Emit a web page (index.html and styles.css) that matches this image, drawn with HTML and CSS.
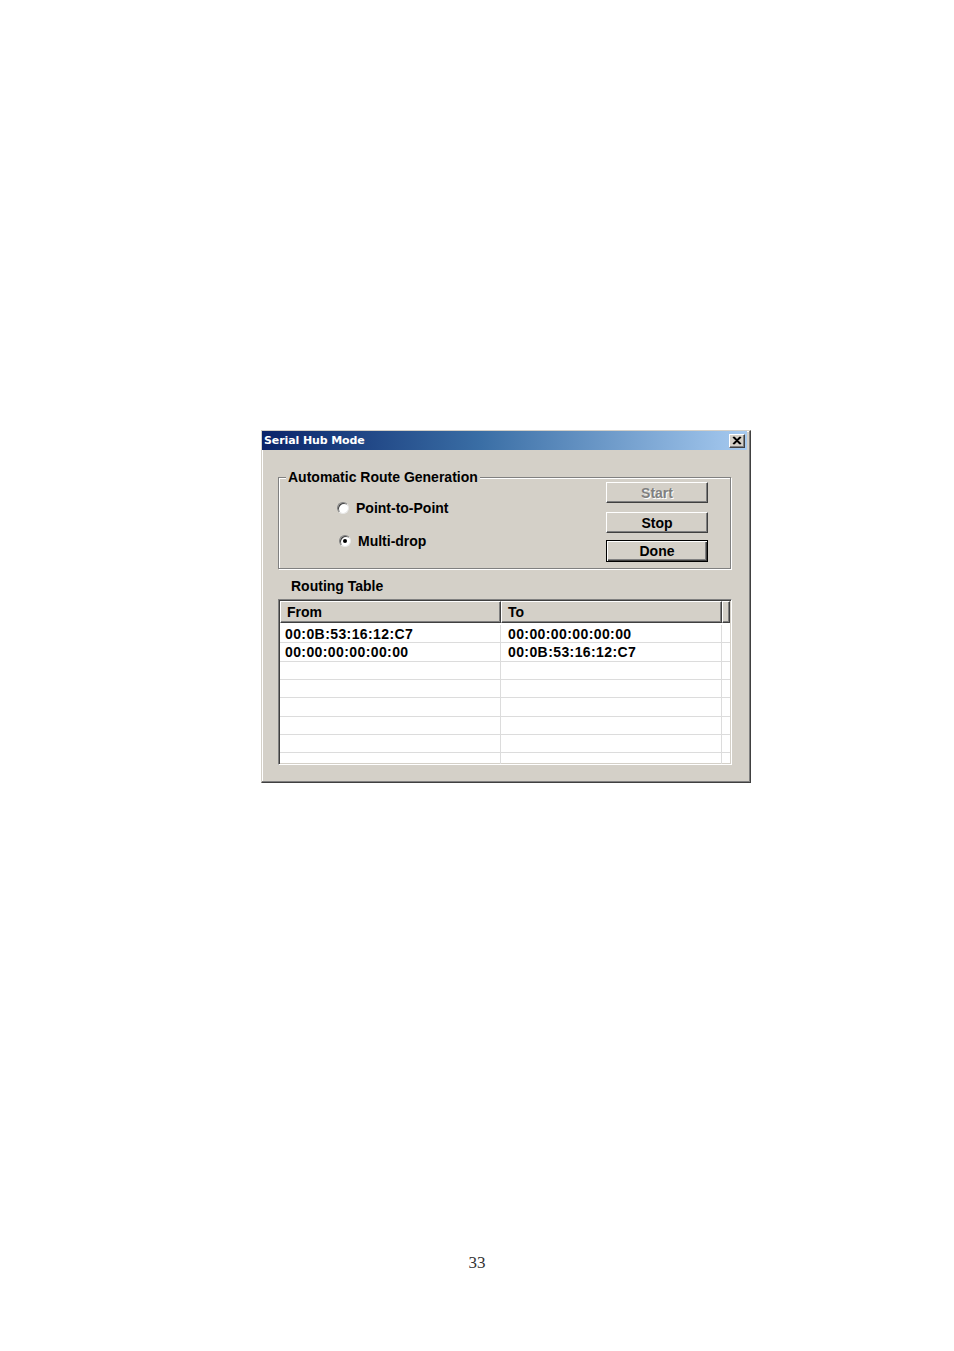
FILE: index.html
```html
<!DOCTYPE html>
<html>
<head>
<meta charset="utf-8">
<title>Serial Hub Mode</title>
<link rel="stylesheet" href="styles.css">
</head>
<body>
<div class="page">
  <div class="dialog">
    <div class="titlebar">
      <span class="title">Serial Hub Mode</span>
      <span class="close">
        <svg width="10" height="9" viewBox="0 0 10 9"><path d="M1 1 L8 8 M2 1 L9 8 M8 1 L1 8 M9 1 L2 8" stroke="#000" stroke-width="1.3" fill="none"/></svg>
      </span>
    </div>

    <div class="group">
      <span class="legend">Automatic Route Generation</span>
      <div class="radios">
        <div class="radio-row"><span class="radio"></span><span>Point-to-Point</span></div>
        <div class="radio-row second"><span class="radio checked"></span><span>Multi-drop</span></div>
      </div>
      <div class="buttons">
        <div class="btn disabled">Start</div>
        <div class="btn stop">Stop</div>
        <div class="btn default">Done</div>
      </div>
    </div>

    <div class="rt-label">Routing Table</div>

    <div class="table">
      <div class="thead">
        <div class="th c1">From</div>
        <div class="th c2">To</div>
        <div class="th c3"></div>
      </div>
      <div class="tbody">
        <div class="tr"><div class="td c1">00:0B:53:16:12:C7</div><div class="td c2">00:00:00:00:00:00</div><div class="td c3"></div></div>
        <div class="tr"><div class="td c1">00:00:00:00:00:00</div><div class="td c2">00:0B:53:16:12:C7</div><div class="td c3"></div></div>
        <div class="tr"><div class="td c1"></div><div class="td c2"></div><div class="td c3"></div></div>
        <div class="tr"><div class="td c1"></div><div class="td c2"></div><div class="td c3"></div></div>
        <div class="tr"><div class="td c1"></div><div class="td c2"></div><div class="td c3"></div></div>
        <div class="tr"><div class="td c1"></div><div class="td c2"></div><div class="td c3"></div></div>
        <div class="tr"><div class="td c1"></div><div class="td c2"></div><div class="td c3"></div></div>
        <div class="tr"><div class="td c1"></div><div class="td c2"></div><div class="td c3"></div></div>
      </div>
    </div>
  </div>

  <div class="pagenum">33</div>
</div>
</body>
</html>
```

FILE: styles.css
```css
html, body {
  margin: 0;
  padding: 0;
  background: #fff;
}

.page {
  width: 954px;
  height: 1351px;
  padding-top: 430px;
  box-sizing: border-box;
}

.dialog {
  margin-left: 261px;
  width: 490px;
  height: 353px;
  box-sizing: border-box;
  background: #d4d0c8;
  border: 1px solid;
  border-color: #d4d0c8 #404040 #404040 #d4d0c8;
  box-shadow: inset -1px -1px 0 #808080, inset 1px 1px 0 #fff;
  padding: 0 3px 0 0;
  font-family: "Liberation Sans", Arial, sans-serif;
  font-weight: bold;
  font-size: 14px;
  color: #000;
}

.titlebar {
  height: 19px;
  background: linear-gradient(to right, #0a246a 0%, #3a6ea5 45%, #a6caf0 100%);
  display: flex;
  align-items: center;
  justify-content: space-between;
  padding: 0 2px 0 2px;
}

.title {
  font-family: "DejaVu Sans", Verdana, sans-serif;
  font-size: 11px;
  font-weight: bold;
  color: #fff;
  letter-spacing: -0.1px;
}

.close {
  width: 16px;
  height: 14px;
  box-sizing: border-box;
  background: #d4d0c8;
  border: 1px solid;
  border-color: #fff #404040 #404040 #fff;
  box-shadow: inset -1px -1px 0 #808080;
  display: flex;
  align-items: center;
  justify-content: center;
}

.close svg { display: block; }

.group {
  position: relative;
  margin: 27px 0 0 16px;
  width: 453px;
  height: 92px;
  box-sizing: border-box;
  border: 1px solid #808080;
  box-shadow: inset 1px 1px 0 #fff, 1px 1px 0 #fff;
  display: flex;
  justify-content: space-between;
}

.legend {
  position: absolute;
  top: -10px;
  left: 7px;
  padding: 0 2px;
  background: #d4d0c8;
  line-height: 18px;
}

.radios {
  padding: 21px 0 0 58px;
}

.radio-row {
  display: flex;
  align-items: center;
  height: 17px;
  gap: 7px;
}

.radio-row.second {
  margin-top: 16px;
  padding-left: 2px;
}

.radio {
  width: 12px;
  height: 12px;
  box-sizing: border-box;
  border-radius: 50%;
  background: #fff;
  border: 1px solid;
  border-color: #808080 #e8e8e8 #e8e8e8 #808080;
  box-shadow: inset 1px 1px 0 #404040;
  position: relative;
}

.radio.checked::after {
  content: "";
  position: absolute;
  left: 3px;
  top: 3px;
  width: 4px;
  height: 4px;
  border-radius: 50%;
  background: #000;
}

.buttons {
  display: flex;
  flex-direction: column;
  padding-top: 4px;
  margin-right: 22px;
}

.btn {
  width: 102px;
  height: 21px;
  box-sizing: border-box;
  background: #d4d0c8;
  border: 1px solid;
  border-color: #fff #404040 #404040 #fff;
  box-shadow: inset -1px -1px 0 #808080;
  display: flex;
  align-items: center;
  justify-content: center;
  line-height: 1;
}

.btn.disabled {
  color: #808080;
  text-shadow: 1px 1px 0 #fff;
}

.btn.stop {
  margin-top: 9px;
}

.btn.default {
  margin-top: 7px;
  height: 22px;
  border: 1px solid #000;
  box-shadow: inset 1px 1px 0 #fff, inset -1px -1px 0 #404040, inset -2px -2px 0 #808080;
}

.rt-label {
  margin: 9px 0 0 29px;
  line-height: 17px;
}

.table {
  margin: 4px 0 0 16px;
  width: 454px;
  height: 166px;
  box-sizing: border-box;
  border: 1px solid;
  border-color: #808080 #fff #fff #808080;
  box-shadow: inset 1px 1px 0 #404040, inset -1px -1px 0 #d4d0c8;
  padding: 1px;
  overflow: hidden;
  background: #fff;
}

.thead {
  display: flex;
  height: 22px;
}

.th {
  box-sizing: border-box;
  background: #d4d0c8;
  border: 1px solid;
  border-color: #fff #404040 #404040 #fff;
  box-shadow: inset -1px -1px 0 #808080;
  padding-left: 6px;
  display: flex;
  align-items: center;
  line-height: 1;
}

.c1 { width: 221px; }
.c2 { width: 221px; }
.c3 { flex: 1; }

.tbody {
  padding-top: 2px;
}

.tr {
  display: flex;
  height: 18.35px;
  box-sizing: border-box;
  border-bottom: 1px solid #dcdcdc;
}

.td {
  box-sizing: border-box;
  border-right: 1px solid #dcdcdc;
  display: flex;
  align-items: center;
  letter-spacing: 0.4px;
  padding-left: 5px;
  white-space: nowrap;
}

.td.c2 { padding-left: 7px; }
.td.c3 { border-right: none; }

.pagenum {
  margin-top: 470px;
  text-align: center;
  font-family: "Liberation Serif", "Times New Roman", serif;
  font-size: 17px;
  color: #333;
}
```
